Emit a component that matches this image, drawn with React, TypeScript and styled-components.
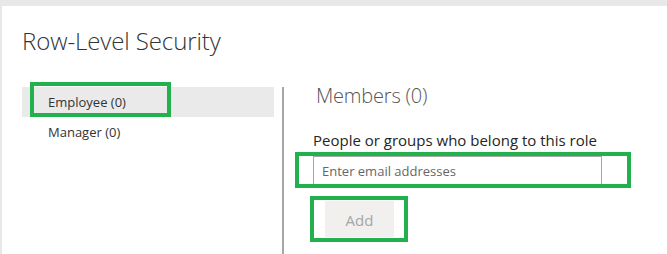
import React from 'react';
import styled, { createGlobalStyle } from 'styled-components';

const GlobalStyle = createGlobalStyle`
  html, body {
    margin: 0;
    padding: 0;
    background: #e8e8e8;
    font-family: 'Open Sans', 'Noto Sans', sans-serif;
    overflow: hidden;
  }
`;

const Page = styled.div`
  width: 667px;
  height: 254px;
  padding: 6px 0 0 2px;
  box-sizing: border-box;
`;

const Dialog = styled.div`
  background: #ffffff;
  height: 100%;
  padding: 0 0 0 20px;
  box-sizing: border-box;
`;

const Title = styled.h1`
  margin: 0;
  padding-top: 19px;
  height: 81px;
  box-sizing: border-box;
  font-size: 24px;
  font-weight: 300;
  color: #333333;
  letter-spacing: -0.1px;
  line-height: 32px;
`;

const Body = styled.div`
  display: flex;
  align-items: stretch;
  height: 167px;
`;

const RoleList = styled.ul`
  list-style: none;
  margin: 0;
  padding: 0;
  width: 252px;
`;

const RoleItem = styled.li<{ $selected?: boolean }>`
  position: relative;
  height: 30px;
  padding-left: 26px;
  display: flex;
  align-items: center;
  font-size: 13px;
  color: #333333;
  background: ${p => (p.$selected ? '#eaeaea' : 'transparent')};
`;

const Divider = styled.div`
  width: 2px;
  margin-left: 8px;
  background: #a6a6a6;
`;

const Members = styled.div`
  padding-left: 29px;
  display: flex;
  flex-direction: column;
`;

const MembersTitle = styled.h2`
  margin: 0 0 0 3px;
  font-size: 20px;
  font-weight: 300;
  color: #555555;
  line-height: 18px;
  letter-spacing: -0.2px;
`;

const FieldLabel = styled.label`
  margin-top: 26px;
  font-size: 15px;
  color: #252525;
  line-height: 18px;
`;

const InputWrap = styled.div`
  position: relative;
  align-self: flex-start;
  margin-top: 7px;
`;

const ButtonWrap = styled.div`
  position: relative;
  align-self: flex-start;
  margin: 15px 0 0 12px;
`;

const EmailInput = styled.input`
  display: block;
  width: 289px;
  height: 30px;
  margin: 0;
  padding: 0 8px;
  box-sizing: border-box;
  border: 1px solid #a6a6a6;
  font-family: inherit;
  font-size: 13px;
  color: #333333;
  outline: none;

  &::placeholder {
    color: #666666;
  }
`;

const AddButton = styled.button`
  display: block;
  width: 69px;
  height: 36px;
  margin: 0;
  padding: 2px 0 0;
  border: none;
  background: #f1f0ef;
  color: #a6a6a6;
  font-family: inherit;
  font-size: 15px;
  cursor: default;
`;

const Highlight = styled.span<{ $top: number; $left: number; $w: number; $h: number }>`
  position: absolute;
  top: ${p => p.$top}px;
  left: ${p => p.$left}px;
  width: ${p => p.$w}px;
  height: ${p => p.$h}px;
  border: 4px solid #22b14c;
  box-sizing: border-box;
  pointer-events: none;
`;

export default function App() {
  return (
    <>
      <GlobalStyle />
      <Page>
        <Dialog>
          <Title>Row-Level Security</Title>
          <Body>
            <RoleList>
              <RoleItem $selected>
                Employee (0)
                <Highlight $top={-5} $left={8} $w={141} $h={35} />
              </RoleItem>
              <RoleItem>Manager (0)</RoleItem>
            </RoleList>
            <Divider />
            <Members>
              <MembersTitle>Members (0)</MembersTitle>
              <FieldLabel>People or groups who belong to this role</FieldLabel>
              <InputWrap>
                <EmailInput placeholder="Enter email addresses" />
                <Highlight $top={-4} $left={-18} $w={336} $h={36} />
              </InputWrap>
              <ButtonWrap>
                <AddButton disabled>Add</AddButton>
                <Highlight $top={-5} $left={-15} $w={98} $h={46} />
              </ButtonWrap>
            </Members>
          </Body>
        </Dialog>
      </Page>
    </>
  );
}
